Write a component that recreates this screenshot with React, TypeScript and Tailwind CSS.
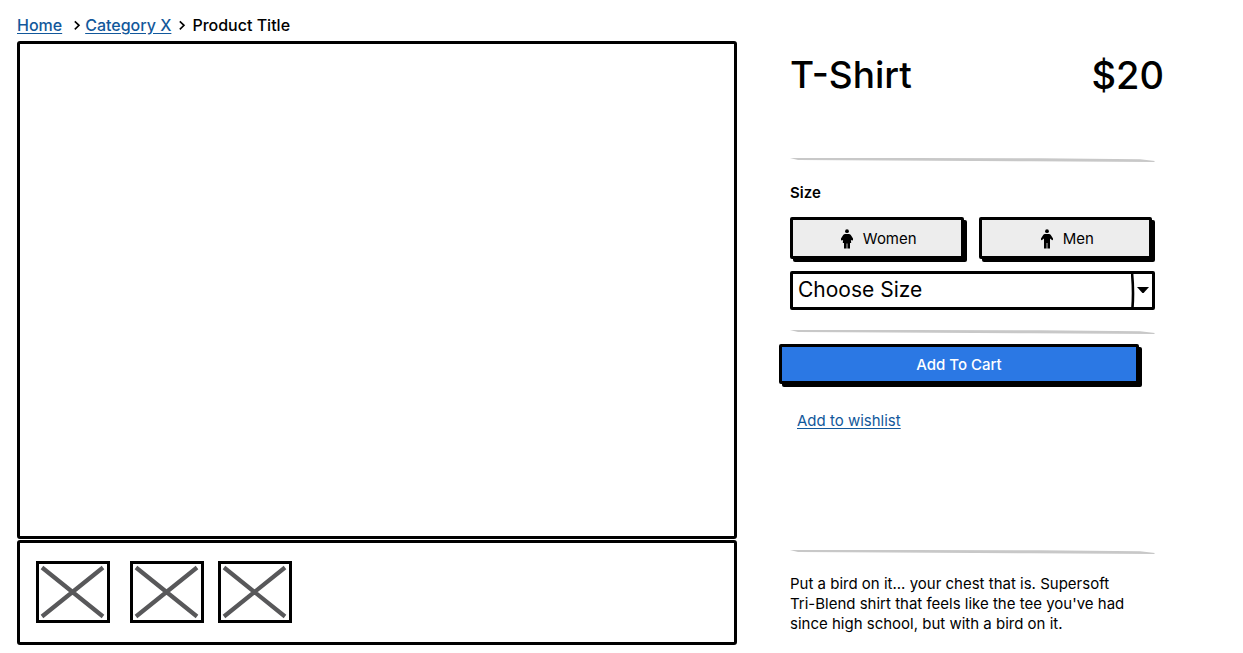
import type { ReactNode } from "react";

function SketchRule() {
  return (
    <svg
      className="block h-1 w-full text-[#c8c8c8]"
      viewBox="0 0 365 4"
      preserveAspectRatio="none"
      aria-hidden="true"
    >
      <path d="M0 0 L120 0 L250 0.2 L350 1.2 L365 3 L364 4 L240 3.2 L100 2.6 L8 2 Z" fill="currentColor" />
    </svg>
  );
}

function Chevron() {
  return (
    <svg className="h-2.5 w-2" viewBox="0 0 8 10" aria-hidden="true">
      <path d="M1.8 1.3 L6 5.3 L1.8 9.3" fill="none" stroke="#000" strokeWidth="1.6" />
    </svg>
  );
}

function Thumbnail({ label }: { label: string }) {
  return (
    <button
      type="button"
      aria-label={label}
      className="h-[62px] w-[74px] border-3 border-black bg-white"
    >
      <svg className="block h-full w-full" viewBox="0 0 68 56" aria-hidden="true">
        <path d="M3 3.5 L64 52.5 M64 3.5 L3 52.5" stroke="#58585a" strokeWidth="4.2" fill="none" />
      </svg>
    </button>
  );
}

function WomanIcon() {
  return (
    <svg className="h-5 w-3" viewBox="0 0 12 20" aria-hidden="true">
      <circle cx="6" cy="2.2" r="1.9" />
      <path d="M4.2 5 H7.8 Q9 5 9.8 6.1 L12 9.6 Q12.3 10.8 11.4 11.5 L9.9 11 L10.2 14 H9 V19.4 H6.4 V14.6 H5.6 V19.4 H3 V14 H1.8 L2.1 11 L0.6 11.5 Q-0.3 10.8 0 9.6 L2.2 6.1 Q3 5 4.2 5 Z" />
    </svg>
  );
}

function ManIcon() {
  return (
    <svg className="h-5 w-3" viewBox="0 0 12 20" aria-hidden="true">
      <circle cx="6" cy="2.2" r="1.9" />
      <path d="M4 5 H8 Q9.1 5 9.8 6 L12 9.6 Q12.2 10.8 11.3 11.3 L9 9.4 V19.4 H6.4 V14 H5.6 V19.4 H3 V9.4 L0.7 11.3 Q-0.2 10.8 0 9.6 L2.2 6 Q2.9 5 4 5 Z" />
    </svg>
  );
}

function ChoiceButton({ icon, children }: { icon: ReactNode; children: ReactNode }) {
  return (
    <button
      type="button"
      className="flex h-[42px] flex-1 items-center justify-center gap-2.5 rounded-[2px] border-3 border-black bg-[#ededed] pt-0.5 pl-1 text-[15px] shadow-[3px_3px_0_#000]"
    >
      {icon}
      {children}
    </button>
  );
}

export default function App() {
  return (
    <div className="min-h-screen bg-white pt-[15px] pr-[79px] pb-2 pl-[17px] font-['Inter',sans-serif] text-black">
      <nav aria-label="Breadcrumb">
        <ol className="flex h-[26px] items-start text-[16px] leading-5 font-medium">
          <li>
            <a href="#home" className="text-[#12589b] underline underline-offset-2">Home</a>
          </li>
          <li aria-hidden="true" className="flex h-5 w-[23px] items-center justify-center pl-1.5">
            <Chevron />
          </li>
          <li>
            <a href="#category" className="text-[#12589b] underline underline-offset-2">Category X</a>
          </li>
          <li aria-hidden="true" className="flex h-5 w-[21px] items-center justify-center">
            <Chevron />
          </li>
          <li aria-current="page">Product Title</li>
        </ol>
      </nav>

      <main className="grid grid-cols-[720fr_385fr] gap-[42px]">
        <section aria-label="Product images" className="flex flex-col gap-px">
          <div className="aspect-[720/498] rounded-[3px] border-3 border-black" />
          <div className="flex items-start rounded-[3px] border-3 border-black px-4 pt-[18px] pb-4">
            <div className="mr-5">
              <Thumbnail label="Image 1" />
            </div>
            <div className="flex gap-[14px]">
              <Thumbnail label="Image 2" />
              <Thumbnail label="Image 3" />
            </div>
          </div>
        </section>

        <section aria-label="Product details" className="flex flex-col">
          <header className="flex items-center justify-between pt-[10px] pl-[11px] leading-[48px] font-medium">
            <h1 className="text-[37px] leading-[48px]">T-Shirt</h1>
            <p className="text-[38px] leading-[48px]">$20</p>
          </header>

          <div className="mt-[59px] pr-[9px] pl-[11px]">
            <SketchRule />
            <label htmlFor="size" className="mt-[21px] block text-[15px] leading-5 font-semibold">Size</label>
            <div className="mt-[14px] flex gap-[15px] pr-[3px]">
              <ChoiceButton icon={<WomanIcon />}>Women</ChoiceButton>
              <ChoiceButton icon={<ManIcon />}>Men</ChoiceButton>
            </div>
            <div className="relative mt-3">
              <select
                id="size"
                className="block h-[39px] w-full appearance-none rounded-[2px] border-3 border-black bg-white pr-8 pb-1.5 pl-[5px] text-[21px]"
              >
                <option>Choose Size</option>
              </select>
              <svg className="pointer-events-none absolute top-0 right-0 h-10 w-6" viewBox="0 0 24 40" aria-hidden="true">
                <path d="M1 2 Q2.8 20 1.4 38" fill="none" stroke="#000" strokeWidth="2.6" />
                <path d="M6 16 H18 L12.6 22 H11.4 Z" />
              </svg>
            </div>
            <div className="mt-5">
              <SketchRule />
            </div>
          </div>

          <button
            type="button"
            className="mt-[10px] mr-[25px] h-10 rounded-[2px] border-3 border-black bg-[#2b78e4] pt-0.5 text-[15px] font-medium text-white shadow-[3px_3px_0_#000]"
          >
            Add To Cart
          </button>
          <a href="#wishlist" className="mt-[27px] ml-[18px] self-start text-[15px] leading-5 text-[#12589b] underline underline-offset-2">
            Add to wishlist
          </a>

          <div className="mt-[119px] pr-[9px] pl-[11px]">
            <SketchRule />
            <p className="mt-5 pr-6 text-[15px] leading-5">
              Put a bird on it... your chest that is. Supersoft Tri-Blend shirt that feels like the tee you've had
              since high school, but with a bird on it.
            </p>
          </div>
        </section>
      </main>
    </div>
  );
}
